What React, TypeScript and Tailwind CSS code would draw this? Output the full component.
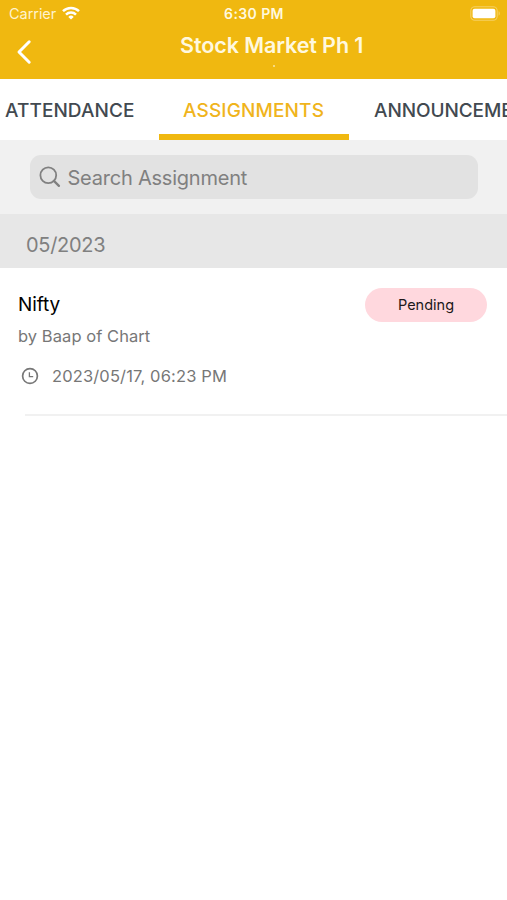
function StatusBar() {
  return (
    <div className="grid h-7 grid-cols-3 items-center pl-[9px] pr-[6px] text-white">
      <div className="flex items-center gap-[6px] text-[14.5px] leading-none tracking-[-0.05px] text-[#fff3cd]">
        <span>Carrier</span>
        <svg width="18" height="14" viewBox="0 0 18 14" className="-mt-[2px]" fill="none" stroke="#fff" strokeWidth="2.5">
          <path d="M1 5.2a11.4 11.4 0 0 1 16 0" />
          <path d="M4 8.6a7.1 7.1 0 0 1 10 0" />
          <path d="M9 13.6 6.3 10.9a3.9 3.9 0 0 1 5.4 0Z" fill="#fff" stroke="none" />
        </svg>
      </div>
      <span className="-ml-[2px] text-center text-[14px] font-semibold leading-none tracking-[0.4px] text-[#fff8df]">6:30 PM</span>
      <svg width="31" height="15" viewBox="0 0 31 15" className="-mt-px justify-self-end">
        <rect x="0.8" y="0.8" width="26.4" height="13.4" rx="4" fill="none" stroke="#f5cf62" strokeWidth="1.1" />
        <rect x="2.6" y="2.8" width="22.8" height="9.4" rx="2" fill="#fff" />
        <path d="M28.6 5.3c1.6.6 1.6 3.8 0 4.4Z" fill="#f5cf62" />
      </svg>
    </div>
  );
}

function Header() {
  return (
    <header className="h-[79px] bg-[#f0b810]">
      <StatusBar />
      <div className="flex h-[51px]">
        <svg width="16" height="26" viewBox="0 0 16 26" className="ml-4 mt-[11px]" fill="none" stroke="#fff" strokeWidth="3" strokeLinecap="round" strokeLinejoin="round">
          <path d="M13.2 2.8 3 13l10.2 10.2" />
        </svg>
        <div className="ml-[148px] w-[188px]">
          <h1 className="mt-[3px] whitespace-nowrap text-[21.5px] font-semibold leading-[28px] tracking-[-0.08px] text-[#fff8df]">Stock Market Ph 1</h1>
          <div className="ml-[93px] mt-[6px] size-[2px] rounded-full bg-[#fae6a4]" />
        </div>
      </div>
    </header>
  );
}

function Tabs() {
  return (
    <nav className="flex h-[61px] overflow-hidden whitespace-nowrap bg-white text-[19px] font-medium leading-[64px] text-[#424950]">
      <span className="w-[159px] shrink-0 pl-[5px] tracking-[0.08px]">ATTENDANCE</span>
      <span className="w-[190px] shrink-0 border-b-[6px] border-[#f0b810] pl-6 tracking-[0.14px] text-[#f0b41c]">ASSIGNMENTS</span>
      <span className="shrink-0 pl-[25px] tracking-[-0.08px]">ANNOUNCEMENTS</span>
    </nav>
  );
}

export default function App() {
  return (
    <div className="h-[900px] w-[507px] overflow-hidden bg-white font-['Inter','Liberation_Sans',sans-serif]">
      <Header />
      <Tabs />
      <div className="h-[74px] bg-[#f1f1f1] pl-[30px] pr-[29px] pt-[15px]">
        <div className="flex h-11 items-center rounded-[11px] bg-[#e2e2e2] pl-[9px] text-[#808080]">
          <svg width="22" height="22" viewBox="0 0 22 22" fill="none" stroke="currentColor" strokeWidth="1.8">
            <circle cx="9.3" cy="9.3" r="7.9" />
            <path d="m14.9 14.9 5 5" strokeWidth="2.3" strokeLinecap="round" />
          </svg>
          <span className="ml-[6.5px] mt-px whitespace-nowrap text-[20px] leading-none tracking-[-0.22px]">Search Assignment</span>
        </div>
      </div>
      <div className="h-[54px] bg-[#e7e7e7] pl-[26px] pt-2 text-[20px] leading-[47px] tracking-[-0.3px] text-[#808080]">05/2023</div>
      <article className="flex h-[146px] justify-between pl-[18px] pr-[20px]">
        <div className="whitespace-nowrap text-[16.5px] text-[#777]">
          <h2 className="mt-6 text-[19px] leading-[26px] tracking-[-0.1px] text-black">Nifty</h2>
          <p className="mt-[5px] leading-[26px] tracking-[0.06px]">by Baap of Chart</p>
          <div className="mt-[14px] flex items-center leading-[26px]">
            <svg width="18" height="18" viewBox="0 0 18 18" className="ml-[3px]" fill="none" stroke="currentColor">
              <circle cx="9" cy="9" r="7.4" strokeWidth="1.7" />
              <path d="M8.4 5.2v4.4h3.8" strokeWidth="1.3" />
            </svg>
            <span className="ml-[13px] tracking-[0.14px]">2023/05/17, 06:23 PM</span>
          </div>
        </div>
        <span className="mt-5 flex h-[34px] w-[122px] items-center justify-center rounded-full bg-[#ffd8de] text-[14.5px] text-[#20181a]">Pending</span>
      </article>
      <div className="ml-[25px] h-[2px] bg-[#f1f1f1]" />
    </div>
  );
}
